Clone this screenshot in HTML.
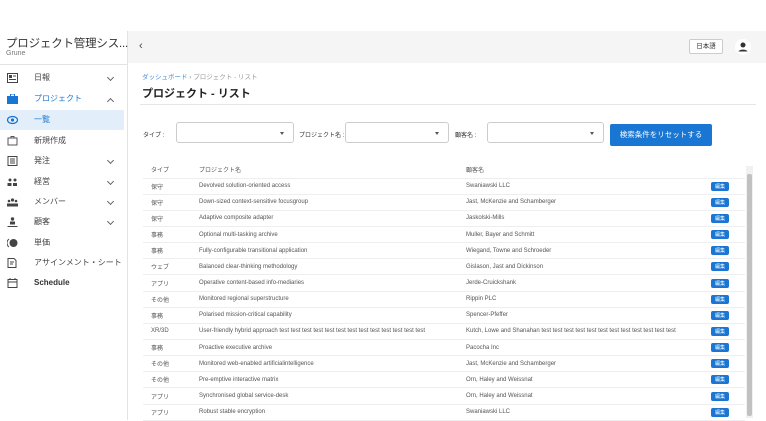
<!DOCTYPE html><html><head><meta charset="utf-8"><style>
*{box-sizing:border-box;margin:0;padding:0}
body{width:766px;height:420px;overflow:hidden;background:#fff;font-family:"Liberation Sans","Noto Sans CJK JP",sans-serif;color:#333;position:relative}
.abs{position:absolute}
.side{left:0;top:31px;width:128px;height:389px;border-right:1px solid #e3e3e3;background:#fff}
.hdr{left:128px;top:31px;width:638px;height:32px;background:#f5f5f5}
.mi{position:absolute;left:0;width:124px;height:20px;font-size:8px;color:#444;line-height:20px}
.mi .ic{position:absolute;left:7px;top:5px;width:11px;height:10px}
.mi .t{position:absolute;left:34px}
.mi .ch{position:absolute;left:108px;top:7px;width:5px;height:5px;border-right:1px solid #666;border-bottom:1px solid #666;transform:rotate(45deg)}
.mi .up{position:absolute;left:108px;top:10px;width:5px;height:5px;border-left:1px solid #666;border-top:1px solid #666;transform:rotate(45deg)}
td{font-size:6px;color:#555;height:16.15px;border-bottom:1px solid #eee;white-space:nowrap}
.btn{display:inline-block;background:#1976d2;color:#fff;font-size:5px;padding:1px 4px;border-radius:2px}
.sel{position:absolute;top:122px;height:21px;border:1px solid #ccc;border-radius:3px;background:#fff}
.sel:after{content:"";position:absolute;right:9px;top:9px;border:2.5px solid transparent;border-top:3px solid #555}
.lbl{position:absolute;top:130px;font-size:6px;color:#333}
</style></head><body>
<div class="abs side">
<div class="abs" style="left:6px;top:4px;font-size:11.5px;color:#333;white-space:nowrap;letter-spacing:-0.2px">プロジェクト管理シス...</div>
<div class="abs" style="left:6px;top:19px;font-size:7px;color:#777">Grune</div>
<div class="abs" style="left:0;top:33px;width:127px;border-top:1px solid #e3e3e3"></div>
</div>
<div class="abs" style="left:0;top:0">
<div class="mi" style="top:68px"><svg class="ic" viewBox="0 0 11 10"><rect x="0.5" y="0.5" width="10" height="9" fill="none" stroke="#444"/><rect x="2" y="2" width="3" height="3" fill="#444"/><path d="M6 3h3M2 6.5h7" stroke="#444"/></svg><span class="t">日報</span><span class="ch"></span></div>
<div class="mi" style="top:89px;color:#1976d2"><svg class="ic" viewBox="0 0 11 10"><rect x="0" y="2" width="11" height="8" fill="#1976d2"/><rect x="3.5" y="0" width="4" height="2.5" fill="none" stroke="#1976d2"/></svg><span class="t">プロジェクト</span><span class="up"></span></div>
<div class="mi" style="top:110px;background:#e3eefb;color:#1976d2"><svg class="ic" viewBox="0 0 11 10"><ellipse cx="5.5" cy="5" rx="5" ry="3.5" fill="none" stroke="#1976d2" stroke-width="1.3"/><circle cx="5.5" cy="5" r="1.6" fill="#1976d2"/></svg><span class="t">一覧</span></div>
<div class="mi" style="top:131px"><svg class="ic" viewBox="0 0 11 10"><path d="M1 2h9v7H1z M4 2V0.5h3V2" fill="none" stroke="#555"/></svg><span class="t">新規作成</span></div>
<div class="mi" style="top:151px"><svg class="ic" viewBox="0 0 11 10"><rect x="1" y="0.5" width="9" height="9" fill="none" stroke="#444"/><path d="M3 3h5M3 5h5M3 7h5" stroke="#444"/></svg><span class="t">発注</span><span class="ch"></span></div>
<div class="mi" style="top:172px"><svg class="ic" viewBox="0 0 11 10"><circle cx="3" cy="3" r="1.5" fill="#444"/><circle cx="8" cy="3" r="1.5" fill="#444"/><rect x="0.5" y="6" width="4" height="3" fill="#444"/><rect x="6" y="6" width="4" height="3" fill="#444"/></svg><span class="t">経営</span><span class="ch"></span></div>
<div class="mi" style="top:192px"><svg class="ic" viewBox="0 0 11 10"><circle cx="2" cy="4" r="1.3" fill="#444"/><circle cx="5.5" cy="3" r="1.6" fill="#444"/><circle cx="9" cy="4" r="1.3" fill="#444"/><rect x="0" y="6.5" width="11" height="3" fill="#444"/></svg><span class="t">メンバー</span><span class="ch"></span></div>
<div class="mi" style="top:212px"><svg class="ic" viewBox="0 0 11 10"><circle cx="5.5" cy="2" r="1.7" fill="#444"/><rect x="3" y="4.5" width="5" height="3" fill="#444"/><path d="M0.5 9.5h10" stroke="#444"/></svg><span class="t">顧客</span><span class="ch"></span></div>
<div class="mi" style="top:233px"><svg class="ic" viewBox="0 0 11 10"><circle cx="6.5" cy="5" r="4" fill="#444"/><path d="M2 1a5 5 0 0 0 0 8" fill="none" stroke="#444"/></svg><span class="t">単価</span></div>
<div class="mi" style="top:253px"><svg class="ic" viewBox="0 0 11 10"><path d="M1 0.5h6l2 2v7H1z M3 4h4M3 6h3" fill="none" stroke="#444"/></svg><span class="t">アサインメント・シート</span></div>
<div class="mi" style="top:273px;font-weight:bold;color:#333"><svg class="ic" viewBox="0 0 11 10"><rect x="1" y="1.5" width="9" height="8" fill="none" stroke="#444"/><path d="M1 4h9M3 0v2M8 0v2" stroke="#444"/></svg><span class="t">Schedule</span></div>
</div>
<div class="abs hdr">
<div class="abs" style="left:11px;top:9px;font-size:11px;color:#444">‹</div>
<div class="abs" style="left:561px;top:8px;width:34px;height:15px;border:1px solid #ccc;border-radius:2px;background:#fff;font-size:6.5px;text-align:center;line-height:13px">日本語</div>
<svg class="abs" style="left:607px;top:8px" width="16" height="16" viewBox="0 0 16 16"><circle cx="8" cy="8" r="8" fill="#fff"/><circle cx="8" cy="6" r="2.5" fill="#333"/><path d="M3.5 12.5c1-2.5 8-2.5 9 0" fill="#333"/></svg>
</div>
<div class="abs" style="left:142px;top:71px;font-size:6.5px;color:#999"><span style="color:#4a8fd6">ダッシュボード</span> › プロジェクト - リスト</div>
<div class="abs" style="left:142px;top:85px;font-size:11px;font-weight:bold;color:#222">プロジェクト - リスト</div>
<div class="abs" style="left:140px;top:104px;width:616px;border-top:1px solid #e6e6e6"></div>
<div class="lbl" style="left:143px">タイプ :</div>
<div class="sel" style="left:176px;width:118px"></div>
<div class="lbl" style="left:299px">プロジェクト名 :</div>
<div class="sel" style="left:345px;width:104px"></div>
<div class="lbl" style="left:455px">顧客名 :</div>
<div class="sel" style="left:487px;width:117px"></div>
<div class="abs" style="left:610px;top:124px;width:102px;height:22px;background:#1976d2;border-radius:2px;color:#fff;font-size:7.5px;text-align:center;line-height:22px">検索条件をリセットする</div>
<table class="abs" style="left:143px;top:162px;width:602px;border-collapse:collapse;table-layout:fixed">
<colgroup><col style="width:56px"><col style="width:267px"><col><col style="width:34px"></colgroup>
<tr><td style="padding-left:8px">タイプ</td><td>プロジェクト名</td><td>顧客名</td><td></td></tr>
<tr><td style="padding-left:8px">保守</td><td>Devolved solution-oriented access</td><td>Swaniawski LLC</td><td><span class="btn">編集</span></td></tr>
<tr><td style="padding-left:8px">保守</td><td>Down-sized context-sensitive focusgroup</td><td>Jast, McKenzie and Schamberger</td><td><span class="btn">編集</span></td></tr>
<tr><td style="padding-left:8px">保守</td><td>Adaptive composite adapter</td><td>Jaskolski-Mills</td><td><span class="btn">編集</span></td></tr>
<tr><td style="padding-left:8px">事務</td><td>Optional multi-tasking archive</td><td>Muller, Bayer and Schmitt</td><td><span class="btn">編集</span></td></tr>
<tr><td style="padding-left:8px">事務</td><td>Fully-configurable transitional application</td><td>Wiegand, Towne and Schroeder</td><td><span class="btn">編集</span></td></tr>
<tr><td style="padding-left:8px">ウェブ</td><td>Balanced clear-thinking methodology</td><td>Gislason, Jast and Dickinson</td><td><span class="btn">編集</span></td></tr>
<tr><td style="padding-left:8px">アプリ</td><td>Operative content-based info-mediaries</td><td>Jerde-Cruickshank</td><td><span class="btn">編集</span></td></tr>
<tr><td style="padding-left:8px">その他</td><td>Monitored regional superstructure</td><td>Rippin PLC</td><td><span class="btn">編集</span></td></tr>
<tr><td style="padding-left:8px">事務</td><td>Polarised mission-critical capability</td><td>Spencer-Pfeffer</td><td><span class="btn">編集</span></td></tr>
<tr><td style="padding-left:8px">XR/3D</td><td>User-friendly hybrid approach test test test test test test test test test test test test test</td><td>Kutch, Lowe and Shanahan test test test test test test test test test test test test</td><td><span class="btn">編集</span></td></tr>
<tr><td style="padding-left:8px">事務</td><td>Proactive executive archive</td><td>Pacocha Inc</td><td><span class="btn">編集</span></td></tr>
<tr><td style="padding-left:8px">その他</td><td>Monitored web-enabled artificialintelligence</td><td>Jast, McKenzie and Schamberger</td><td><span class="btn">編集</span></td></tr>
<tr><td style="padding-left:8px">その他</td><td>Pre-emptive interactive matrix</td><td>Orn, Haley and Weissnat</td><td><span class="btn">編集</span></td></tr>
<tr><td style="padding-left:8px">アプリ</td><td>Synchronised global service-desk</td><td>Orn, Haley and Weissnat</td><td><span class="btn">編集</span></td></tr>
<tr><td style="padding-left:8px">アプリ</td><td>Robust stable encryption</td><td>Swaniawski LLC</td><td><span class="btn">編集</span></td></tr>
</table>
<div class="abs" style="left:746px;top:166px;width:7px;height:252px;background:#f1f1f1"></div>
<div class="abs" style="left:747px;top:174px;width:5px;height:242px;background:#c1c1c1;border-radius:2px"></div>
</body></html>
